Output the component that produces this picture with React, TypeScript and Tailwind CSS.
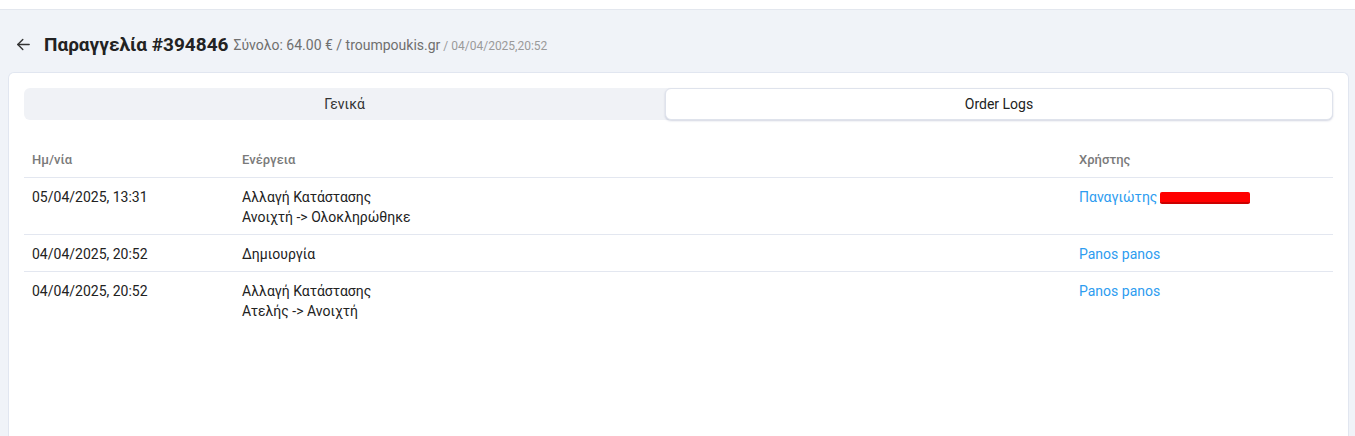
import React from "react";

type LogRow = {
  date: string;
  action: string[];
  user: string;
  redacted?: boolean;
};

const rows: LogRow[] = [
  {
    date: "05/04/2025, 13:31",
    action: ["Αλλαγή Κατάστασης", "Ανοιχτή -> Ολοκληρώθηκε"],
    user: "Παναγιώτης",
    redacted: true,
  },
  { date: "04/04/2025, 20:52", action: ["Δημιουργία"], user: "Panos panos" },
  {
    date: "04/04/2025, 20:52",
    action: ["Αλλαγή Κατάστασης", "Ατελής -> Ανοιχτή"],
    user: "Panos panos",
  },
];

function BackArrow() {
  return (
    <svg width="17" height="17" viewBox="0 0 24 24" fill="none" stroke="#333" strokeWidth="2" strokeLinecap="round" strokeLinejoin="round">
      <path d="M20 12H4" />
      <path d="M11 5l-7 7 7 7" />
    </svg>
  );
}

export default function App() {
  return (
    <div className="min-h-[436px] w-full bg-[#f0f3f8] text-[#212121]" style={{ fontFamily: "Roboto, 'Noto Sans', sans-serif" }}>
      <div className="h-[10px] bg-white border-b border-[#e3e7ee]" />

      <div className="flex items-center h-[62px] pl-[15px] pt-[6px]">
        <BackArrow />
        <h1 className="ml-[12px] text-[19px] font-bold text-[#222] leading-none">Παραγγελία #394846</h1>
        <span className="ml-[5px] text-[14px] text-[#6f6f6f] leading-none pt-[2px]">Σύνολο: 64.00 € / troumpoukis.gr</span>
        <span className="ml-[3px] text-[12px] text-[#9a9a9a] leading-none pt-[3px]">/ 04/04/2025,20:52</span>
      </div>

      <div className="mx-[8px] mr-[6px] bg-white rounded-t-[6px] border border-[#e1e6f0] border-b-0 px-[15px] pt-[15px] h-[364px]">
        <div className="flex h-[32px] rounded-[6px] bg-[#f0f2f6]">
          <div className="flex-1 flex items-center justify-center text-[14px] text-[#333]">Γενικά</div>
          <div className="w-[668px] flex items-center justify-center text-[14px] text-[#222] bg-white rounded-[6px] border border-[#dfe3ec] shadow-[0_1px_2px_rgba(80,90,140,0.25)]">Order Logs</div>
        </div>

        <table className="w-full mt-[30px] text-[14px] border-collapse">
          <thead>
            <tr className="border-b border-[#e3e7f0]">
              <th className="text-left font-medium text-[13px] text-[#7a7a7a] pl-[8px] pb-[7px] w-[218px]">Ημ/νία</th>
              <th className="text-left font-medium text-[13px] text-[#7a7a7a] pb-[7px]">Ενέργεια</th>
              <th className="text-left font-medium text-[13px] text-[#7a7a7a] pb-[7px] w-[254px]">Χρήστης</th>
            </tr>
          </thead>
          <tbody>
            {rows.map((r, i) => (
              <tr key={i} className={i < rows.length - 1 ? "border-b border-[#e3e7f0]" : ""}>
                <td className="align-top pl-[8px] pt-[9px] pb-[7px] leading-[20px] text-[#222]">{r.date}</td>
                <td className="align-top pt-[9px] pb-[7px] leading-[20px] text-[#222]">
                  {r.action.map((a, j) => (
                    <div key={j}>{a}</div>
                  ))}
                </td>
                <td className="align-top pt-[9px] pb-[7px] leading-[20px] text-[#2d9cf0]">
                  {r.user}
                  {r.redacted && (
                    <span className="inline-block align-middle ml-[3px] w-[90px] h-[12px] bg-[#ff0000] rounded-[2px] border-b-2 border-[#c00]" />
                  )}
                </td>
              </tr>
            ))}
          </tbody>
        </table>
      </div>
    </div>
  );
}
